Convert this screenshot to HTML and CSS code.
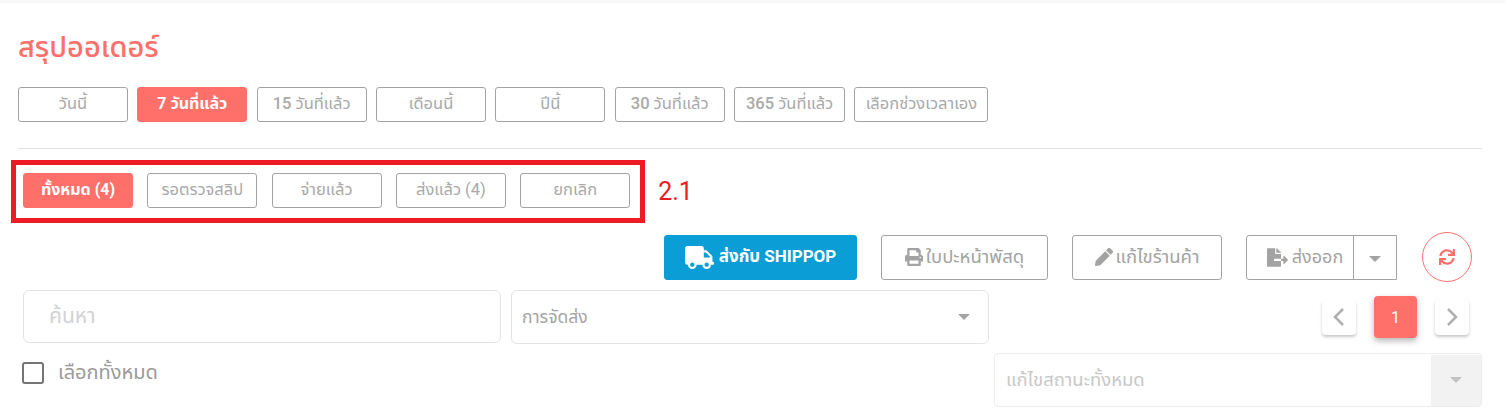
FILE: index.html
```html
<!DOCTYPE html>
<html lang="th">
<head>
  <meta charset="UTF-8" />
  <meta name="viewport" content="width=device-width, initial-scale=1.0" />
  <title>สรุปออเดอร์</title>
  <link rel="stylesheet" href="styles.css">
</head>
<body>
  <div class="page">
    <h1 class="title">สรุปออเดอร์</h1>

    <div class="range-row">
      <button class="chip">วันนี้</button>
      <button class="chip active">7 วันที่แล้ว</button>
      <button class="chip"><b>15</b> วันที่แล้ว</button>
      <button class="chip">เดือนนี้</button>
      <button class="chip">ปีนี้</button>
      <button class="chip"><b>30</b> วันที่แล้ว</button>
      <button class="chip wide"><b>365</b> วันที่แล้ว</button>
      <button class="chip custom">เลือกช่วงเวลาเอง</button>
    </div>

    <hr class="divider" />

    <div class="status-row">
      <div class="status-box">
        <button class="chip active">ทั้งหมด (4)</button>
        <button class="chip">รอตรวจสลิป</button>
        <button class="chip">จ่ายแล้ว</button>
        <button class="chip">ส่งแล้ว (4)</button>
        <button class="chip">ยกเลิก</button>
      </div>
      <span class="note">2.1</span>
    </div>

    <div class="action-row">
      <button class="btn btn-ship">
        <svg class="icon icon-truck" viewBox="0 0 640 512"><path d="M624 352h-16V243.9c0-12.7-5.1-24.9-14.1-33.9L494 110.1c-9-9-21.2-14.1-33.9-14.1H416V48c0-26.5-21.5-48-48-48H48C21.5 0 0 21.5 0 48v320c0 26.5 21.5 48 48 48h16c0 53 43 96 96 96s96-43 96-96h128c0 53 43 96 96 96s96-43 96-96h48c8.800 0 16-7.200 16-16v-32c0-8.800-7.200-16-16-16zM160 464c-26.500 0-48-21.500-48-48s21.500-48 48-48 48 21.500 48 48-21.500 48-48 48zm320 0c-26.500 0-48-21.500-48-48s21.500-48 48-48 48 21.500 48 48-21.500 48-48 48zm80-208H416V144h44.100l99.900 99.900V256z"/></svg>
        ส่งกับ SHIPPOP
      </button>
      <button class="btn btn-print">
        <svg class="icon" viewBox="0 0 512 512"><path d="M448 192V77.250c0-8.490-3.370-16.620-9.370-22.630L393.370 9.370c-6-6-14.140-9.370-22.630-9.370H96C78.330 0 64 14.330 64 32v160c-35.350 0-64 28.650-64 64v112c0 8.840 7.160 16 16 16h48v96c0 17.670 14.330 32 32 32h320c17.670 0 32-14.330 32-32v-96h48c8.840 0 16-7.160 16-16V256c0-35.350-28.650-64-64-64zm-64 256H128v-96h256v96zm0-224H128V64h192v48c0 8.840 7.160 16 16 16h48v96zm48 72c-13.250 0-24-10.750-24-24 0-13.260 10.750-24 24-24s24 10.740 24 24c0 13.250-10.750 24-24 24z"/></svg>
        ใบปะหน้าพัสดุ
      </button>
      <button class="btn btn-edit">
        <svg class="icon" viewBox="0 0 512 512"><path d="M497.900 142.100l-46.100 46.100c-4.700 4.700-12.300 4.700-17 0l-111-111c-4.700-4.700-4.700-12.300 0-17l46.100-46.100c18.700-18.700 49.100-18.700 67.900 0l60.100 60.100c18.800 18.700 18.800 49.100 0 67.900zM284.200 99.800L21.600 362.400.4 483.900c-2.900 16.400 11.400 30.600 27.800 27.800l121.500-21.300 262.600-262.600c4.700-4.700 4.700-12.300 0-17l-111-111c-4.800-4.700-12.400-4.700-17.100 0z"/></svg>
        แก้ไขร้านค้า
      </button>
      <div class="split">
        <button class="split-main">
          <svg class="icon" viewBox="0 0 576 512"><path d="M384 121.900c0-6.300-2.500-12.400-7-16.900L279.100 7c-4.500-4.500-10.600-7-17-7H256v128h128zM571 308l-95.700-96.400c-10.100-10.100-27.400-3-27.400 11.300V288h-64v64h64v65.200c0 14.300 17.300 21.400 27.400 11.300L571 332c6.600-6.600 6.600-17.400 0-24zm-379 28v-32c0-8.800 7.200-16 16-16h176V160H248c-13.200 0-24-10.800-24-24V0H24C10.700 0 0 10.700 0 24v464c0 13.300 10.700 24 24 24h336c13.300 0 24-10.700 24-24V352H208c-8.800 0-16-7.200-16-16z"/></svg>
          ส่งออก
        </button>
        <button class="split-caret"><span class="caret"></span></button>
      </div>
      <button class="refresh">
        <svg class="icon" viewBox="0 0 512 512"><path d="M440.650 12.570l4 82.770A247.160 247.160 0 0 0 255.830 8C134.730 8 33.910 94.920 12.290 209.820A12 12 0 0 0 24.090 224h49.050a12 12 0 0 0 11.670-9.260 175.910 175.910 0 0 1 317-56.940l-101.460-4.860a12 12 0 0 0-12.570 12v47.410a12 12 0 0 0 12 12H500a12 12 0 0 0 12-12V12a12 12 0 0 0-12-12h-47.370a12 12 0 0 0-11.980 12.570zM255.830 432a175.610 175.610 0 0 1-146-77.800l101.800 4.870a12 12 0 0 0 12.570-12v-47.400a12 12 0 0 0-12-12H12a12 12 0 0 0-12 12V500a12 12 0 0 0 12 12h47.350a12 12 0 0 0 12-12.600l-4.150-82.570A247.170 247.170 0 0 0 255.830 504c121.110 0 221.930-86.920 243.550-201.820a12 12 0 0 0-11.800-14.180h-49.050a12 12 0 0 0-11.670 9.260A175.860 175.860 0 0 1 255.830 432z"/></svg>
      </button>
    </div>

    <div class="filter-row">
      <div class="field search">ค้นหา</div>
      <div class="field select">การจัดส่ง<span class="caret"></span></div>
      <div class="pager">
        <button class="page-btn">
          <svg class="chev" viewBox="0 0 12 20"><path d="M10 2 2 10l8 8"/></svg>
        </button>
        <button class="page-btn current">1</button>
        <button class="page-btn">
          <svg class="chev" viewBox="0 0 12 20"><path d="M2 2l8 8-8 8"/></svg>
        </button>
      </div>
    </div>

    <div class="bulk-row">
      <label class="check"><span class="box"></span>เลือกทั้งหมด</label>
      <div class="status-select">
        <span>แก้ไขสถานะทั้งหมด</span>
        <span class="status-caret"><span class="caret"></span></span>
      </div>
    </div>
  </div>
</body>
</html>
```

FILE: styles.css
```css
*, *::before, *::after { box-sizing: border-box; }
html, body { height: 411px; overflow: hidden; }
body {
  margin: 0;
  background-color: #fff;
  font-family: Roboto, "Noto Sans", "Noto Sans Thai", sans-serif;
  color: #a3a3a3;
}
button {
  font-family: inherit;
  background: #fff;
  padding: 0;
}
.page {
  border-top: 3px solid #f8f8f8;
  padding: 0 23px 0 18px;
}
.title {
  margin: 0;
  padding-top: 26px;
  height: 84px;
  font-size: 29px;
  line-height: 36px;
  font-weight: 500;
  color: #ff706b;
}
.range-row {
  display: flex;
  gap: 9.35px;
}
.chip {
  width: 110px;
  height: 35px;
  padding-bottom: 2px;
  border: 1px solid #a3a3a3;
  border-radius: 3px;
  font-size: 16.5px;
  font-weight: 400;
  color: #a9a9a9;
}
.chip b { font-weight: 500; }
.chip.active {
  background-color: #ff706b;
  border-color: #ff706b;
  color: #fff;
  font-size: 16px;
  font-weight: 700;
}
.chip.wide { width: 111px; }
.chip.custom { width: 134px; }
.divider {
  margin: 26px 0 11px;
  border: 0;
  border-top: 1px solid #e2e2e2;
}
.status-row {
  display: flex;
  align-items: center;
  margin-left: -7px;
}
.status-box {
  display: flex;
  gap: 14.3px;
  padding: 8px 10px 10px 7px;
  border: 5px solid #ed1c24;
}
.note {
  margin-left: 13px;
  font-size: 25px;
  color: #ed1c24;
}
.action-row {
  display: flex;
  justify-content: flex-end;
  align-items: center;
  gap: 24px;
  margin: 9px 10px 0 0;
}
.btn {
  height: 45px;
  display: flex;
  align-items: center;
  justify-content: center;
  gap: 3px;
  border: 1px solid #a3a3a3;
  border-radius: 3px;
  font-size: 18.5px;
  color: #a3a3a3;
}
.btn-ship {
  width: 193px;
  gap: 5px;
  background-color: #0b9ed6;
  border-color: #0b9ed6;
  color: #fff;
  font-size: 17px;
  font-weight: 700;
}
.btn-print { width: 167px; }
.btn-edit { width: 150px; }
.icon {
  width: 18px;
  height: 18px;
  fill: currentColor;
  flex: none;
}
.icon-truck { width: 29px; height: 23px; }
.split {
  display: flex;
  width: 151px;
  height: 45px;
  border: 1px solid #a3a3a3;
  border-radius: 3px 0 0 3px;
}
.split-main {
  flex: 1;
  display: flex;
  align-items: center;
  justify-content: center;
  gap: 4px;
  padding-left: 10px;
  border: 0;
  font-size: 18px;
  color: #a3a3a3;
  background: none;
}
.split-main .icon { width: 21px; height: 19px; }
.split-caret {
  width: 43px;
  border: 0;
  border-left: 1px solid #a3a3a3;
  background: none;
}
.caret {
  display: inline-block;
  border-top: 6px solid #a3a3a3;
  border-left: 6.5px solid transparent;
  border-right: 6.5px solid transparent;
}
.refresh {
  width: 50px;
  height: 50px;
  margin-left: 1px;
  border: 1px solid #ff706b;
  border-radius: 50%;
  color: #ff706b;
  display: flex;
  align-items: center;
  justify-content: center;
}
.refresh .icon { width: 16px; height: 16px; }
.filter-row {
  display: flex;
  align-items: flex-start;
  margin: 8px 0 0 5px;
}
.field {
  width: 478px;
  height: 53px;
  display: flex;
  align-items: center;
  border: 1px solid #e3e3e3;
  border-radius: 6px;
  font-size: 21px;
}
.search {
  padding-left: 25px;
  color: #d2d2d2;
}
.select {
  height: 54px;
  margin-left: 10px;
  padding: 0 18px 0 10px;
  justify-content: space-between;
  font-size: 17.5px;
  color: #a3a3a3;
}
.pager {
  display: flex;
  align-items: center;
  gap: 18px;
  margin: 6px 13px 0 auto;
}
.page-btn {
  width: 34px;
  height: 35px;
  display: flex;
  align-items: center;
  justify-content: center;
  border: 0;
  border-radius: 4px;
  box-shadow: 0 2px 3px rgba(0, 0, 0, 0.22);
}
.page-btn.current {
  width: 43px;
  height: 42px;
  background-color: #ff706b;
  color: #fff;
  font-size: 16px;
  box-shadow: 0 3px 6px rgba(0, 0, 0, 0.28);
}
.chev {
  width: 12px;
  height: 20px;
  fill: none;
  stroke: #b0b0b0;
  stroke-width: 2.5;
}
.bulk-row {
  display: flex;
  justify-content: space-between;
  align-items: flex-start;
  margin: 9px 0 0 4px;
}
.check {
  display: flex;
  align-items: center;
  gap: 14px;
  margin-top: 5px;
  font-size: 20px;
  color: #9a9a9a;
}
.box {
  width: 22px;
  height: 22px;
  border: 2.5px solid #757575;
  border-radius: 3px;
}
.status-select {
  width: 488px;
  height: 54px;
  display: flex;
  justify-content: space-between;
  align-items: center;
  padding-left: 11px;
  border: 1px solid #ececec;
  border-radius: 4px;
  font-size: 18.5px;
  color: #c8c8c8;
}
.status-caret {
  width: 50px;
  height: 51px;
  display: flex;
  align-items: center;
  justify-content: center;
  background-color: #f2f2f2;
}
.status-caret .caret { border-top-color: #c4c4c4; }
```
